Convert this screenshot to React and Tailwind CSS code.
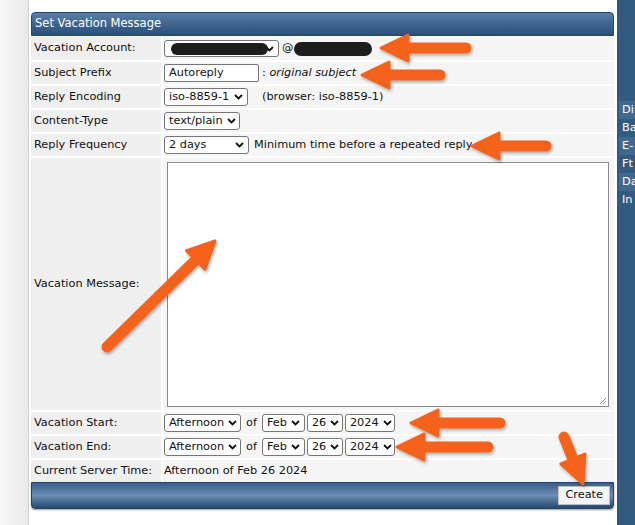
import React from 'react'

const font = { fontFamily: '"DejaVu Sans", Verdana, sans-serif' }

const Chevron = () => (
  <svg width="9" height="6" viewBox="0 0 9 6" className="shrink-0">
    <path d="M1 1l3.5 3.5L8 1" fill="none" stroke="#111" strokeWidth="1.8" />
  </svg>
)

const Select = ({ children, className = '' }) => (
  <div className={`h-[18px] flex items-center justify-between gap-1 border border-[#767676] rounded-[3px] bg-white pl-[4px] pr-[4px] text-[11.3px] leading-none text-[#111] whitespace-nowrap ${className}`}>
    <span>{children}</span>
    <Chevron />
  </div>
)

const Row = ({ label, children, tall }) => (
  <tr>
    <td className={`bg-[#efefef] border-b-2 border-r-2 border-white pl-[3px] text-[11.3px] text-[#111] whitespace-nowrap align-middle w-[131px] ${tall ? '' : 'h-[24px]'}`}>
      {label}
    </td>
    <td className="bg-[#f5f5f5] border-b-2 border-white pl-[1px] text-[11.3px] text-[#111] align-middle whitespace-nowrap">{children}</td>
  </tr>
)

const Arrow = ({ x1, y1, x2, y2 }) => {
  const dx = x2 - x1
  const dy = y2 - y1
  const len = Math.sqrt(dx * dx + dy * dy)
  const ux = dx / len
  const uy = dy / len
  const px = -uy
  const py = ux
  const hl = 27
  const hw = 13
  const bx = x2 - ux * hl
  const by = y2 - uy * hl
  const pts = `${x2},${y2} ${bx + px * hw},${by + py * hw} ${bx - px * hw},${by - py * hw}`
  return (
    <g filter="url(#sh)">
      <line x1={x1} y1={y1} x2={bx + ux * 4} y2={by + uy * 4} stroke="#f4621f" strokeWidth="11" strokeLinecap="round" />
      <polygon points={pts} fill="#f4621f" stroke="#f4621f" strokeWidth="3" strokeLinejoin="round" />
    </g>
  )
}

const menu = ['Di', 'Ba', 'E-', 'Ft', 'Da', 'In']

export default function App() {
  return (
    <div className="relative w-[635px] h-[525px] overflow-hidden flex bg-white" style={font}>
      {/* left gutter */}
      <div className="w-[29px] shrink-0 bg-gradient-to-r from-[#f7f7f7] to-[#e9e9e9] border-r border-[#cfcfcf]" />

      {/* main */}
      <div className="flex-1 bg-white pt-[12px] pl-[2px] pr-[3px]">
        <div className="h-[24px] rounded-t-[4px] border border-[#24466b] bg-gradient-to-b from-[#5b80a8] via-[#3e6590] to-[#2c5078] flex items-center pl-[3px] text-[11.5px] text-white">
          Set Vacation Message
        </div>
        <table className="w-full border-collapse mt-[1px]">
          <tbody>
            <Row label="Vacation Account:">
              <div className="flex items-center">
                <div className="relative w-[115px] h-[17px] border border-[#767676] rounded-[3px] bg-white flex items-center justify-end pr-[4px]">
                  <div className="absolute left-[6px] top-[2px] w-[97px] h-[12px] rounded-full bg-[#1d1d1d]" />
                  <Chevron />
                </div>
                <span className="ml-[3px]">@</span>
                <div className="ml-[1px] w-[78px] h-[14px] rounded-full bg-[#1d1d1d]" />
              </div>
            </Row>
            <Row label="Subject Prefix">
              <div className="flex items-center">
                <div className="w-[95px] h-[18px] border border-[#767676] rounded-[2px] bg-white pl-[4px] flex items-center">Autoreply</div>
                <span className="ml-[3px]">: <i>original subject</i></span>
              </div>
            </Row>
            <Row label="Reply Encoding">
              <div className="flex items-center">
                <Select className="w-[84px]">iso-8859-1</Select>
                <span className="ml-[14px]">(browser: iso-8859-1)</span>
              </div>
            </Row>
            <Row label="Content-Type">
              <Select className="w-[76px]">text/plain</Select>
            </Row>
            <Row label="Reply Frequency">
              <div className="flex items-center">
                <Select className="w-[85px]">2 days</Select>
                <span className="ml-[5px]">Minimum time before a repeated reply</span>
              </div>
            </Row>
            <Row label="Vacation Message:" tall>
              <div className="pt-[4px] pb-[3px] pl-[3px] pr-[5px]">
                <div className="relative h-[245px] border border-[#8a8a8a] bg-white">
                  <svg width="8" height="8" className="absolute right-[1px] bottom-[1px]">
                    <path d="M7 1L1 7M7 4L4 7" stroke="#888" strokeWidth="1" />
                  </svg>
                </div>
              </div>
            </Row>
            {['Vacation Start:', 'Vacation End:'].map((l) => (
              <Row key={l} label={l}>
                <div className="flex items-center">
                  <Select className="w-[77px]">Afternoon</Select>
                  <span className="mx-[5px]">of</span>
                  <Select className="w-[43px]">Feb</Select>
                  <Select className="w-[36px] ml-[2px]">26</Select>
                  <Select className="w-[50px] ml-[2px]">2024</Select>
                </div>
              </Row>
            ))}
            <tr>
              <td className="bg-[#efefef] border-r-2 border-white pl-[3px] h-[23px] text-[11.3px] text-[#111] whitespace-nowrap">Current Server Time:</td>
              <td className="bg-[#f5f5f5] pl-[1px] text-[11.3px] text-[#111]">Afternoon of Feb 26 2024</td>
            </tr>
          </tbody>
        </table>
        <div className="h-[27px] rounded-b-[4px] border border-[#24466b] bg-gradient-to-b from-[#3a5f88] via-[#6a8db3] to-[#28496f] flex items-center justify-end pr-[3px] shadow-[0_1px_2px_rgba(0,0,0,0.4)]">
          <div className="h-[19px] px-[6px] bg-[#f4f4f4] border border-[#bbb] flex items-center text-[11.3px] text-[#111]">Create</div>
        </div>
      </div>

      {/* right sidebar */}
      <div className="w-[18px] shrink-0 bg-[#345a80] pt-[101px] pl-[2px]">
        {menu.map((m, i) => (
          <div key={m} className={`h-[18px] pl-[3px] flex items-center text-[11.3px] text-white overflow-hidden whitespace-nowrap ${i % 2 === 0 ? 'bg-[#41698f]' : ''}`}>
            {m}
          </div>
        ))}
      </div>

      {/* annotation arrows */}
      <svg className="absolute inset-0 pointer-events-none" width="635" height="525">
        <defs>
          <filter id="sh" x="-20%" y="-20%" width="140%" height="140%">
            <feDropShadow dx="1" dy="2" stdDeviation="1.5" floodColor="#000" floodOpacity="0.3" />
          </filter>
        </defs>
        <Arrow x1={466} y1={48} x2={381} y2={48} />
        <Arrow x1={440} y1={75} x2={362} y2={75} />
        <Arrow x1={546} y1={146} x2={472} y2={146} />
        <Arrow x1={107} y1={347} x2={215} y2={241} />
        <Arrow x1={500} y1={423} x2={411} y2={423} />
        <Arrow x1={488} y1={447} x2={397} y2={447} />
        <Arrow x1={564} y1={437} x2={583} y2={484} />
      </svg>
    </div>
  )
}
